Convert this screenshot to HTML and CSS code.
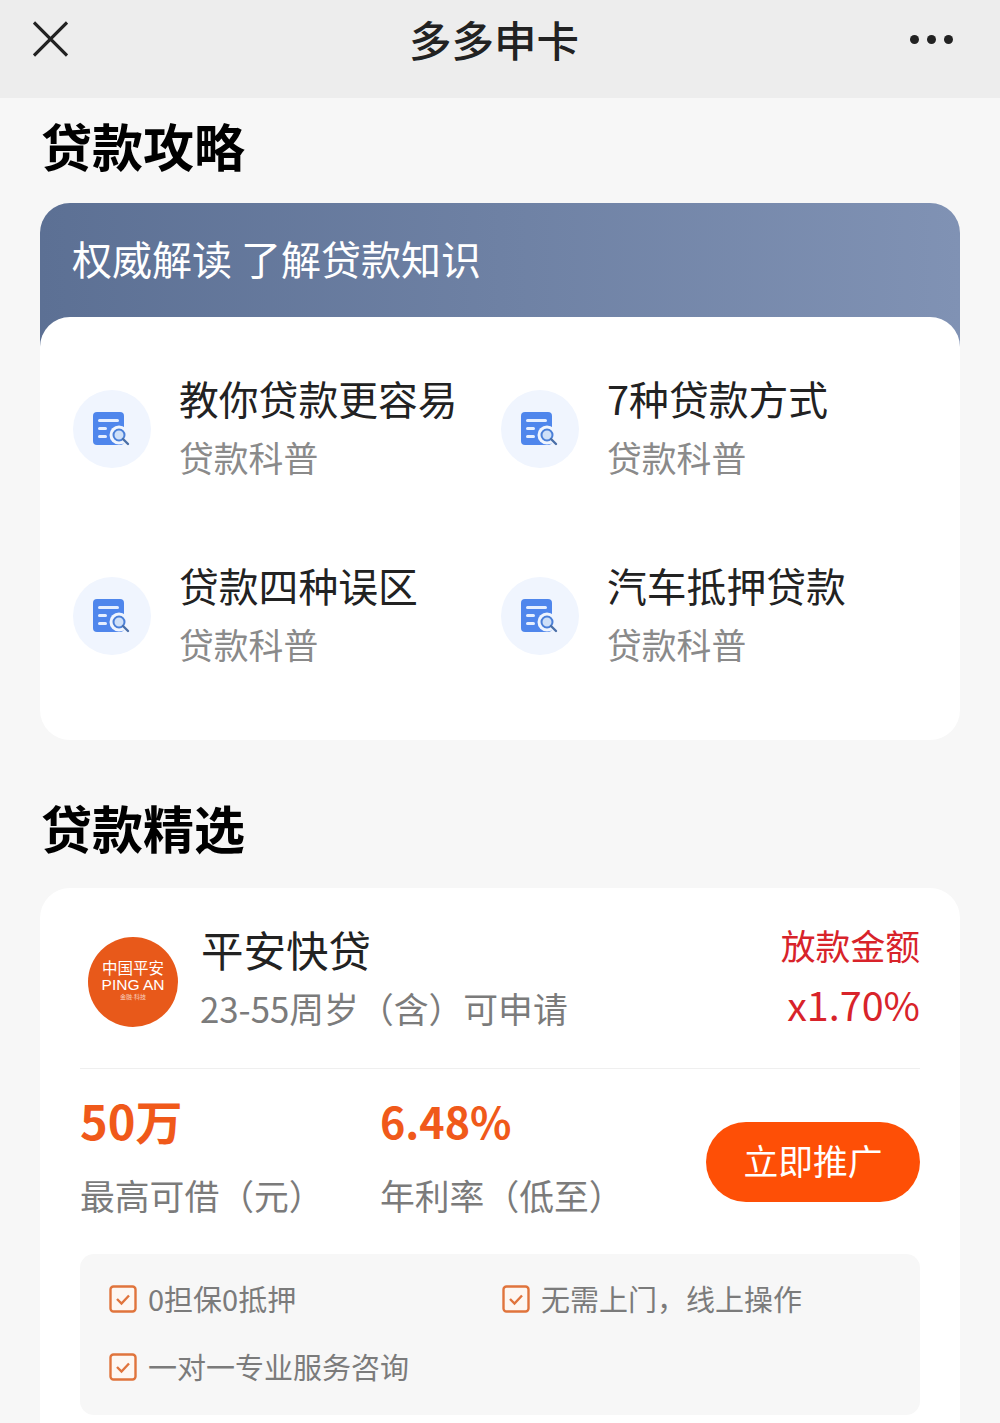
FILE: index.html
```html
<!DOCTYPE html>
<html lang="zh-CN">
<head>
    <meta charset="UTF-8">
    <title>多多申卡</title>
    <link rel="stylesheet" href="styles.css">
</head>
<body>
    <svg class="sprite" width="0" height="0">
        <symbol id="doc" viewBox="0 0 40 36">
            <rect x="1" y="1" width="31" height="33" rx="4" fill="#4f86ec"/>
            <rect x="6" y="8" width="21" height="3" rx="1.5" fill="#e6efff"/>
            <rect x="6" y="16" width="9" height="3" rx="1.5" fill="#e6efff"/>
            <rect x="6" y="24" width="9" height="3" rx="1.5" fill="#e6efff"/>
            <circle cx="27" cy="24" r="9.5" fill="#f0f5fe"/>
            <circle cx="27" cy="24" r="5.5" fill="#cfe0f8" stroke="#4a7fd8" stroke-width="2"/>
            <path d="M31 28l5 5" stroke="#4a6fa8" stroke-width="2.4" stroke-linecap="round"/>
        </symbol>
        <symbol id="check" viewBox="0 0 28 28">
            <rect x="1.5" y="1.5" width="25" height="25" rx="3" fill="#fdf7f2" stroke="#e0743c" stroke-width="2.4"/>
            <path d="M8 14l4.5 4.5L20 10.5" fill="none" stroke="#e0743c" stroke-width="2.4"/>
        </symbol>
    </svg>

    <header class="topbar">
        <svg class="close" viewBox="0 0 36 36"><path d="M1 1l34 34M35 1L1 35" stroke="#222" stroke-width="3.2" fill="none"/></svg>
        <div class="topbar-title">多多申卡</div>
        <div class="more"><i></i><i></i><i></i></div>
    </header>

    <h2 class="section-title first">贷款攻略</h2>
    <section class="guide">
        <div class="guide-head">权威解读 了解贷款知识</div>
        <div class="guide-body">
            <div class="guide-item">
                <div class="guide-icon"><svg><use href="#doc"/></svg></div>
                <div class="guide-text">
                    <div class="guide-name">教你贷款更容易</div>
                    <div class="guide-sub">贷款科普</div>
                </div>
            </div>
            <div class="guide-item">
                <div class="guide-icon"><svg><use href="#doc"/></svg></div>
                <div class="guide-text">
                    <div class="guide-name">7种贷款方式</div>
                    <div class="guide-sub">贷款科普</div>
                </div>
            </div>
            <div class="guide-item">
                <div class="guide-icon"><svg><use href="#doc"/></svg></div>
                <div class="guide-text">
                    <div class="guide-name">贷款四种误区</div>
                    <div class="guide-sub">贷款科普</div>
                </div>
            </div>
            <div class="guide-item">
                <div class="guide-icon"><svg><use href="#doc"/></svg></div>
                <div class="guide-text">
                    <div class="guide-name">汽车抵押贷款</div>
                    <div class="guide-sub">贷款科普</div>
                </div>
            </div>
        </div>
    </section>

    <h2 class="section-title second">贷款精选</h2>
    <section class="product">
        <div class="product-top">
            <div class="logo">
                <div class="logo-cn">中国平安</div>
                <div class="logo-en">PING AN</div>
                <div class="logo-sub">金融·科技</div>
            </div>
            <div class="product-info">
                <div class="product-name">平安快贷</div>
                <div class="product-age">23-55周岁（含）可申请</div>
            </div>
            <div class="product-fee">
                <div class="fee-label">放款金额</div>
                <div class="fee-value">x1.70%</div>
            </div>
        </div>
        <div class="product-stats">
            <div class="stat stat-amount">
                <div class="stat-num">50万</div>
                <div class="stat-label">最高可借（元）</div>
            </div>
            <div class="stat">
                <div class="stat-num stat-rate">6.48%</div>
                <div class="stat-label">年利率（低至）</div>
            </div>
            <button class="promote">立即推广</button>
        </div>
        <div class="perks">
            <div class="perk"><svg><use href="#check"/></svg>0担保0抵押</div>
            <div class="perk"><svg><use href="#check"/></svg>无需上门，线上操作</div>
            <div class="perk"><svg><use href="#check"/></svg>一对一专业服务咨询</div>
        </div>
    </section>
</body>
</html>
```

FILE: styles.css
```css
* {
    box-sizing: border-box;
}

html, body {
    height: 1423px;
    overflow: hidden;
}

body {
    margin: 0;
    padding: 0 40px;
    background-color: #f7f7f7;
    font-family: "Noto Sans CJK SC", "Noto Sans", sans-serif;
    color: #222;
}

.sprite {
    display: block;
    height: 0;
}

.topbar {
    display: flex;
    align-items: center;
    justify-content: space-between;
    height: 98px;
    margin: 0 -40px;
    padding: 0 47px 20px 33px;
    background-color: #ededed;
}

.close {
    width: 35px;
    height: 36px;
}

.topbar-title {
    margin-left: 10px;
    font-size: 42.5px;
    font-weight: 500;
    line-height: 58px;
    color: #222;
}

.more {
    display: flex;
    gap: 8px;
}

.more i {
    width: 9px;
    height: 9px;
    border-radius: 50%;
    background-color: #222;
}

.section-title {
    margin: 0;
    padding-left: 1px;
    font-size: 51px;
    line-height: 70px;
    font-weight: 700;
    color: #000;
}

.section-title.first {
    margin-top: 12px;
}

.section-title.second {
    margin-top: 52px;
}

.guide {
    margin-top: 23px;
}

.guide-head {
    height: 144px;
    padding: 27px 32px 0;
    border-radius: 30px 30px 0 0;
    background: linear-gradient(90deg, #5c7094, #8092b4);
    font-size: 40px;
    line-height: 56px;
    color: #fff;
}

.guide-body {
    display: grid;
    grid-template-columns: 428px 428px;
    grid-auto-rows: 187px;
    height: 423px;
    margin-top: -30px;
    padding: 38px 33px 0;
    background-color: #fff;
    border-radius: 30px;
    position: relative;
}

.guide-item {
    display: flex;
    align-items: flex-start;
    gap: 28px;
}

.guide-icon {
    display: flex;
    align-items: center;
    justify-content: center;
    flex: none;
    width: 78px;
    height: 78px;
    margin-top: 35px;
    border-radius: 50%;
    background-color: #f0f5fe;
}

.guide-icon svg {
    width: 40px;
    height: 36px;
}

.guide-text {
    padding-top: 15px;
}

.guide-name {
    font-size: 39.8px;
    line-height: 56px;
    color: #222;
    white-space: nowrap;
}

.guide-sub {
    margin-top: 6px;
    font-size: 34.8px;
    line-height: 50px;
    color: #8a8a8a;
}

.product {
    margin-top: 26px;
    height: 560px;
    padding: 0 40px;
    background-color: #fff;
    border-radius: 30px 30px 0 0;
}

.product-top {
    display: flex;
    align-items: flex-start;
    height: 181px;
    border-bottom: 1px solid #efefef;
}

.logo {
    display: flex;
    flex-direction: column;
    align-items: center;
    justify-content: center;
    flex: none;
    width: 90px;
    height: 90px;
    margin: 49px 0 0 8px;
    border-radius: 50%;
    background-color: #e8591a;
    color: #fff;
    font-family: "Liberation Sans", "Noto Sans CJK SC", sans-serif;
}

.logo-cn {
    font-size: 15.5px;
    line-height: 16px;
    white-space: nowrap;
}

.logo-en {
    font-size: 15.5px;
    line-height: 15px;
    white-space: nowrap;
}

.logo-sub {
    font-size: 6px;
    line-height: 11px;
    opacity: 0.7;
}

.product-info {
    flex: 1;
    margin: 32px 0 0 23px;
}

.product-name {
    font-size: 42.5px;
    line-height: 58px;
    color: #222;
}

.product-age {
    margin-top: 5px;
    font-size: 34.8px;
    line-height: 50px;
    color: #7b7b7b;
    white-space: nowrap;
    margin-left: -1px;
}

.product-fee {
    margin-top: 33px;
    text-align: right;
}

.fee-label {
    font-size: 34.8px;
    line-height: 48px;
    color: #d8232a;
}

.fee-value {
    margin-top: 11px;
    font-size: 39.5px;
    line-height: 48px;
    color: #d8232a;
}

.product-stats {
    display: flex;
    height: 185px;
    padding-top: 21px;
}

.stat {
    width: 326px;
}

.stat-amount {
    width: 300px;
}

.stat-num {
    font-size: 47px;
    line-height: 60px;
    font-weight: 700;
    color: #f0591a;
}

.stat-rate {
    font-size: 43px;
}

.stat-label {
    margin-top: 20px;
    font-size: 34.8px;
    line-height: 50px;
    color: #7b7b7b;
    white-space: nowrap;
}

.promote {
    flex: none;
    width: 214px;
    height: 80px;
    margin-top: 32px;
    padding: 0 0 5px;
    border: none;
    border-radius: 40px;
    background-color: #fe4f06;
    color: #fff;
    font-family: inherit;
    font-size: 34.8px;
}

.perks {
    display: grid;
    grid-template-columns: 393px 1fr;
    grid-auto-rows: 68px;
    height: 161px;
    padding: 10px 29px 0;
    background-color: #f7f7f7;
    border-radius: 14px;
}

.perk {
    display: flex;
    align-items: center;
    gap: 11px;
    font-size: 29px;
    color: #7b7b7b;
    white-space: nowrap;
}

.perk svg {
    flex: none;
    width: 28px;
    height: 28px;
    margin-top: 1px;
}
```
